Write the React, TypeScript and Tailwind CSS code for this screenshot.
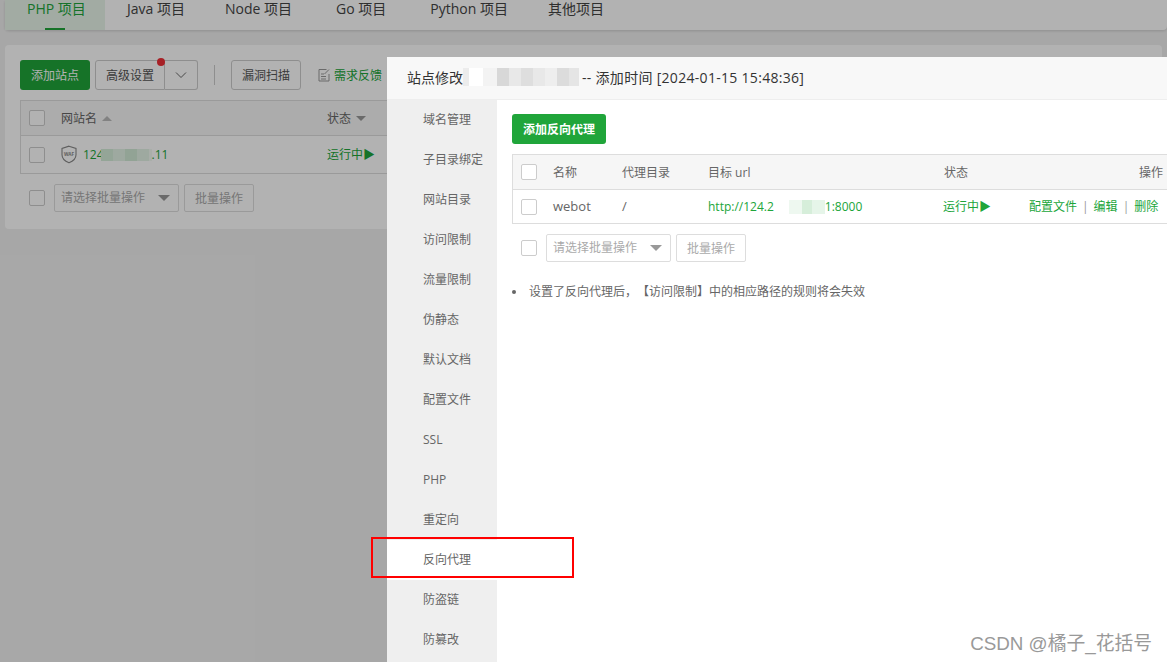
import React from "react";

const font = { fontFamily: '"Open Sans","Noto Sans CJK SC",sans-serif' };
const tabs = ["Java 项目", "Node 项目", "Go 项目", "Python 项目", "其他项目"];
const tabGaps = ["ml-[22px]", "ml-[40px]", "ml-[44px]", "ml-[44px]", "ml-[40px]"];
const side = ["域名管理", "子目录绑定", "网站目录", "访问限制", "流量限制", "伪静态", "默认文档", "配置文件", "SSL", "PHP", "重定向", "反向代理", "防盗链", "防篡改"];

function Check() {
  return <span className="block w-4 h-4 rounded-[2px] border border-[#ccc] bg-white shrink-0" />;
}

function Caret({ className = "" }: { className?: string }) {
  return <span className={"block w-0 h-0 border-x-[5px] border-x-transparent border-t-[5px] border-t-[#999] " + className} />;
}

function Mosaic({ cells, h }: { cells: [number, string][]; h: string }) {
  return (
    <span className={"inline-flex shrink-0 " + h}>
      {cells.map(([w, c], i) => (
        <span key={i} style={{ width: w, background: c }} />
      ))}
    </span>
  );
}

function Batch() {
  return (
    <div className="flex items-center pl-[9px]">
      <Check />
      <div className="ml-[9px] flex items-center justify-between w-[125px] h-7 border border-[#ddd] rounded-[2px] pl-[6px] pr-[8px] text-xs text-[#aaa]">
        <span>请选择批量操作</span>
        <span className="block w-0 h-0 border-x-[6px] border-x-transparent border-t-[6px] border-t-[#999]" />
      </div>
      <div className="ml-[5px] w-[70px] h-7 pt-[2px] flex items-center justify-center border border-[#ddd] rounded-[2px] text-xs text-[#aaa]">批量操作</div>
    </div>
  );
}

export default function App() {
  return (
    <div style={font} className="relative w-[1167px] h-[662px] overflow-hidden bg-[#f0f0f0] text-[#666]">
      <div className="ml-[5px] h-[30px] bg-white flex rounded-b-[4px] shadow-[0_1px_3px_rgba(0,0,0,0.15)]">
        <div className="relative w-[100px] pl-[22px] bg-[#e8f5ea] text-[#20a53a] text-sm leading-[17px]">
          PHP 项目
          <span className="absolute bottom-0 left-[40px] w-5 h-[2px] bg-[#20a53a]" />
        </div>
        <div className="flex text-sm text-[#444] leading-[17px]">
          {tabs.map((t, i) => (
            <span key={t} className={tabGaps[i]}>{t}</span>
          ))}
        </div>
      </div>

      <div className="ml-[5px] mr-[5px] mt-[15px] h-[184px] bg-white rounded-[4px] px-[15px] pt-[15px]">
        <div className="flex items-center h-[30px] text-xs">
          <div className="w-[70px] h-[30px] pt-[2px] rounded-[3px] bg-[#20a53a] text-white flex items-center justify-center">添加站点</div>
          <div className="relative ml-[5px] w-[70px] h-[30px] pt-[2px] rounded-l-[3px] border border-[#ccc] text-[#555] flex items-center justify-center">
            高级设置
            <span className="absolute -top-[3px] -right-[1px] w-2 h-2 rounded-full bg-[#ef2f37]" />
          </div>
          <div className="w-[33px] h-[30px] rounded-r-[3px] border border-l-0 border-[#ccc] flex items-center justify-center">
            <svg width="12" height="8" viewBox="0 0 12 8" fill="none" stroke="#666" strokeWidth="1"><path d="M1 1.5l5 5 5-5" /></svg>
          </div>
          <span className="ml-4 w-px h-5 bg-[#ccc]" />
          <div className="ml-4 w-[70px] h-[30px] pt-[2px] rounded-[3px] border border-[#ccc] text-[#555] flex items-center justify-center">漏洞扫描</div>
          <svg className="ml-[17px]" width="12" height="14" viewBox="0 0 12 14" fill="none" stroke="#999" strokeWidth="1">
            <path d="M8.5 1.5H1v11.5h10V6" />
            <path d="M3 6h3M3 8.5h5M3 11h5" />
            <path d="M6.5 6L11 1.5" />
          </svg>
          <span className="ml-[4px] pt-[2px] text-[#20a53a]">需求反馈</span>
        </div>

        <div className="mt-[10px] w-full border border-[#ddd] text-xs">
          <div className="h-[35px] bg-[#f6f6f6] border-b border-[#ddd] flex items-center pl-[8px]">
            <Check />
            <span className="ml-4 w-[266px] flex items-center">
              <span className="pt-[2px]">网站名</span>
              <span className="ml-[5px] w-0 h-0 border-x-[5px] border-x-transparent border-b-[5px] border-b-[#bbb]" />
            </span>
            <span className="pt-[2px]">状态</span>
            <Caret className="ml-[5px]" />
          </div>
          <div className="h-[37px] flex items-center pl-[8px]">
            <Check />
            <span className="ml-4 w-[266px] flex items-center">
              <svg width="16" height="19" viewBox="0 0 16 19" fill="none" stroke="#888" strokeWidth="1.1">
                <path d="M8 1.2l7 2.2v6.4c0 3.6-3 6.5-7 8-4-1.5-7-4.4-7-8V3.4z" />
                <text x="8" y="10.5" textAnchor="middle" fontSize="4.6" fontWeight="700" fill="#888" stroke="none">WAF</text>
              </svg>
              <span className="ml-[6px] text-[#20a53a] flex items-center">
                124
                <Mosaic h="h-3 -ml-[3px]" cells={[[12, "#d5ecd9"], [12, "#e3f2e5"], [12, "#d2ead6"], [12, "#e3f2e5"], [3, "#f2f9f3"]]} />
                .11
              </span>
            </span>
            <span className="text-[#20a53a]">运行中▶</span>
          </div>
        </div>
        <div className="mt-[10px]">
          <Batch />
        </div>
      </div>

      <div className="absolute inset-0 bg-black/30" />

      <div className="absolute left-[387px] top-[57px] w-[800px] h-[620px] bg-white flex flex-col">
        <div className="h-[43px] shrink-0 bg-[#f8f8f8] border-b border-[#eee] pl-5 flex items-center text-sm text-[#333]">
          站点修改
          <Mosaic h="h-[18px] -mt-[2px]" cells={[[6, "#ececec"], [14, "#fff"], [14, "#f3f3f3"], [12, "#d8d8d8"], [12, "#e8e8e8"], [12, "#dedede"], [12, "#e8e8e8"], [12, "#eeeeee"], [12, "#dcdcdc"], [10, "#e5e5e5"]]} />
          <span className="ml-[3px] tracking-[0.3px]">-- 添加时间 [2024-01-15 15:48:36]</span>
        </div>
        <div className="flex flex-1 min-h-0">
          <div className="w-[110px] shrink-0 bg-[#efefef] text-xs text-[#666]">
            {side.map((s) => (
              <div key={s} className={"h-10 flex items-center pl-9 " + (s === "反向代理" ? "bg-white" : "")}>{s}</div>
            ))}
          </div>
          <div className="flex-1 pl-[15px] pt-[14px]">
            <div className="w-[94px] h-[30px] pt-[2px] rounded-[3px] bg-[#20a53a] text-white text-xs font-semibold flex items-center justify-center">添加反向代理</div>
            <div className="mt-[10px] w-[680px] text-xs border border-[#ddd]">
              <div className="h-[35px] bg-[#f6f6f6] border-b border-[#ddd] flex items-center pl-[8px]">
                <Check />
                <span className="ml-4 w-[69px] pt-[2px]">名称</span>
                <span className="w-[86px] pt-[2px]">代理目录</span>
                <span className="w-[236px] pt-[2px]">目标 url</span>
                <span className="w-[195px] pt-[2px]">状态</span>
                <span className="pt-[2px]">操作</span>
              </div>
              <div className="h-[33px] flex items-center pl-[8px]">
                <Check />
                <span className="ml-4 w-[69px] text-[13px]">webot</span>
                <span className="w-[86px] text-[13px]">/</span>
                <span className="w-[235px] text-[#20a53a] flex items-center">
                  http://124.2
                  <Mosaic h="h-[14px]" cells={[[15, "#fff"], [13, "#eef8f0"], [10, "#d6eeda"], [13, "#e6f5e9"]]} />
                  1:8000
                </span>
                <span className="w-[86px] text-[#20a53a]">运行中▶</span>
                <span className="text-[#20a53a] whitespace-nowrap">
                  配置文件<span className="text-[#999] mx-[5px]">|</span>编辑<span className="text-[#999] mx-[5px]">|</span>删除
                </span>
              </div>
            </div>
            <div className="mt-[10px]">
              <Batch />
            </div>
            <div className="mt-[21px] flex items-center text-xs h-[17px]">
              <span className="w-1 h-1 rounded-full bg-[#666]" />
              <span className="ml-[13px] [text-spacing-trim:space-all]">设置了反向代理后，【访问限制】中的相应路径的规则将会失效</span>
            </div>
          </div>
        </div>
      </div>

      <div className="absolute left-[371px] top-[537px] w-[203px] h-[41px] border-2 border-[#ff0000]" />
      <div className="absolute right-[15px] bottom-[6px] text-[18.8px] text-[#999] leading-[24px]" style={{ fontFamily: '"Liberation Sans","Noto Sans CJK SC",sans-serif' }}>CSDN @橘子_花括号</div>
    </div>
  );
}
